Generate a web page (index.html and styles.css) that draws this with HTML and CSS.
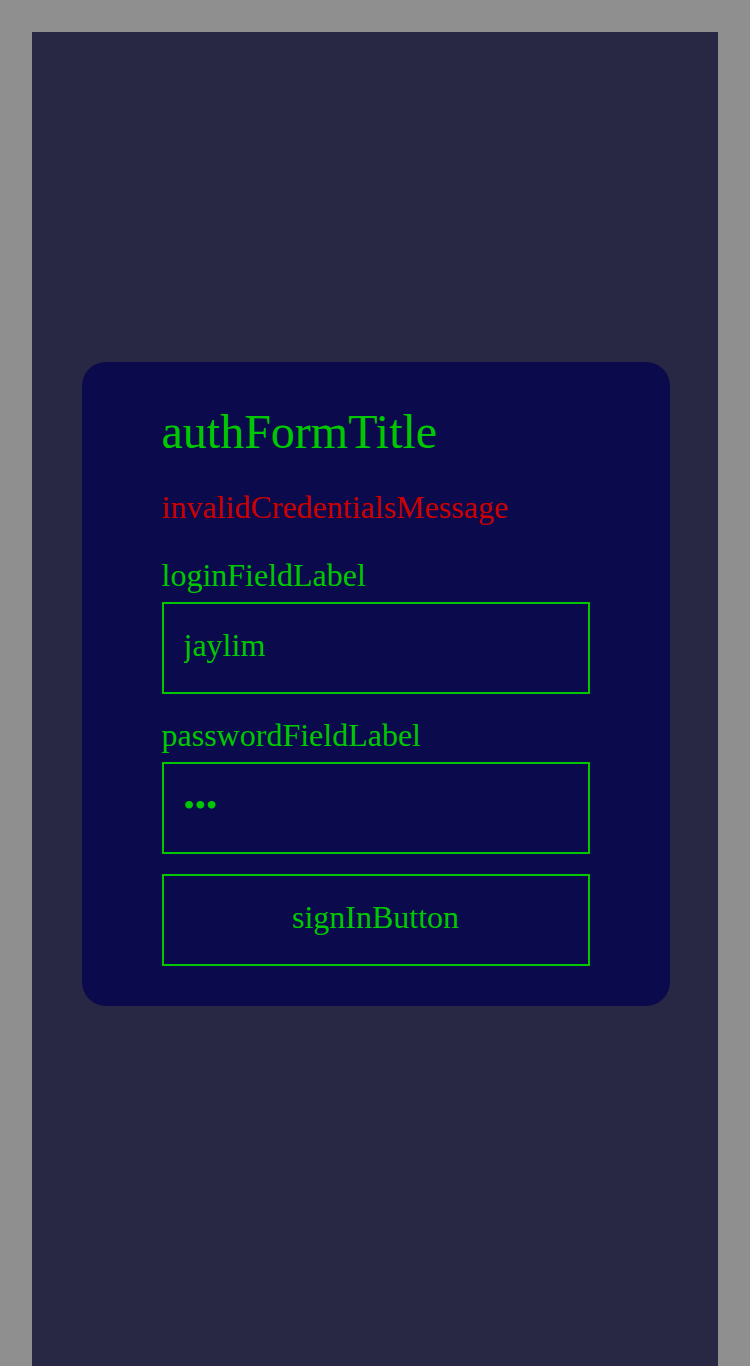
FILE: index.html
```html
<!DOCTYPE html>
<html>
<head>
<meta charset="utf-8">
<link rel="stylesheet" href="styles.css">
</head>
<body>
<main class="panel">
  <form class="card">
    <h1 class="title">authFormTitle</h1>
    <p class="error">invalidCredentialsMessage</p>
    <label class="label" for="login">loginFieldLabel</label>
    <input class="field field-login" id="login" type="text" value="jaylim">
    <label class="label" for="password">passwordFieldLabel</label>
    <input class="field field-password" id="password" type="password" value="abc">
    <button class="button" type="button">signInButton</button>
  </form>
</main>
</body>
</html>
```
FILE: styles.css
```css
html, body {
  margin: 0;
  padding: 0;
}
body {
  background: #8f8f8f;
  padding: 32px 32px 0 32px;
  font-family: "Liberation Serif", "Times New Roman", serif;
}
.panel {
  background: #282844;
  height: 1334px;
  box-sizing: border-box;
  padding-bottom: 30px;
  display: flex;
  align-items: center;
  justify-content: flex-start;
}
.card {
  width: 588px;
  margin-left: 49.5px;
  box-sizing: border-box;
  background: #0a0a4d;
  border-radius: 24px;
  padding: 42px 80px 40px 80px;
  display: flex;
  flex-direction: column;
}
.title {
  margin: 0 0 30px 0;
  font-size: 48px;
  font-weight: normal;
  line-height: normal;
  color: #00c800;
}
.error {
  margin: 0 0 31px 0;
  font-size: 32px;
  line-height: normal;
  color: #cc0000;
}
.label {
  font-size: 32px;
  line-height: normal;
  color: #00c800;
  margin-bottom: 8px;
}
.field {
  font-family: "Liberation Serif", "Times New Roman", serif;
  font-size: 32px;
  color: #00c800;
  background: transparent;
  border: 2px solid #00c800;
  height: 92px;
  box-sizing: border-box;
  padding: 0 20px 6px 20px;
  margin: 0;
  outline: none;
}
.field-login {
  margin-bottom: 23px;
}
.field-password {
  margin-bottom: 20px;
}
.button {
  font-family: "Liberation Serif", "Times New Roman", serif;
  font-size: 32px;
  color: #00c800;
  background: transparent;
  border: 2px solid #00c800;
  height: 92px;
  box-sizing: border-box;
  padding: 0 0 6px 0;
  margin: 0;
  cursor: pointer;
}
```
